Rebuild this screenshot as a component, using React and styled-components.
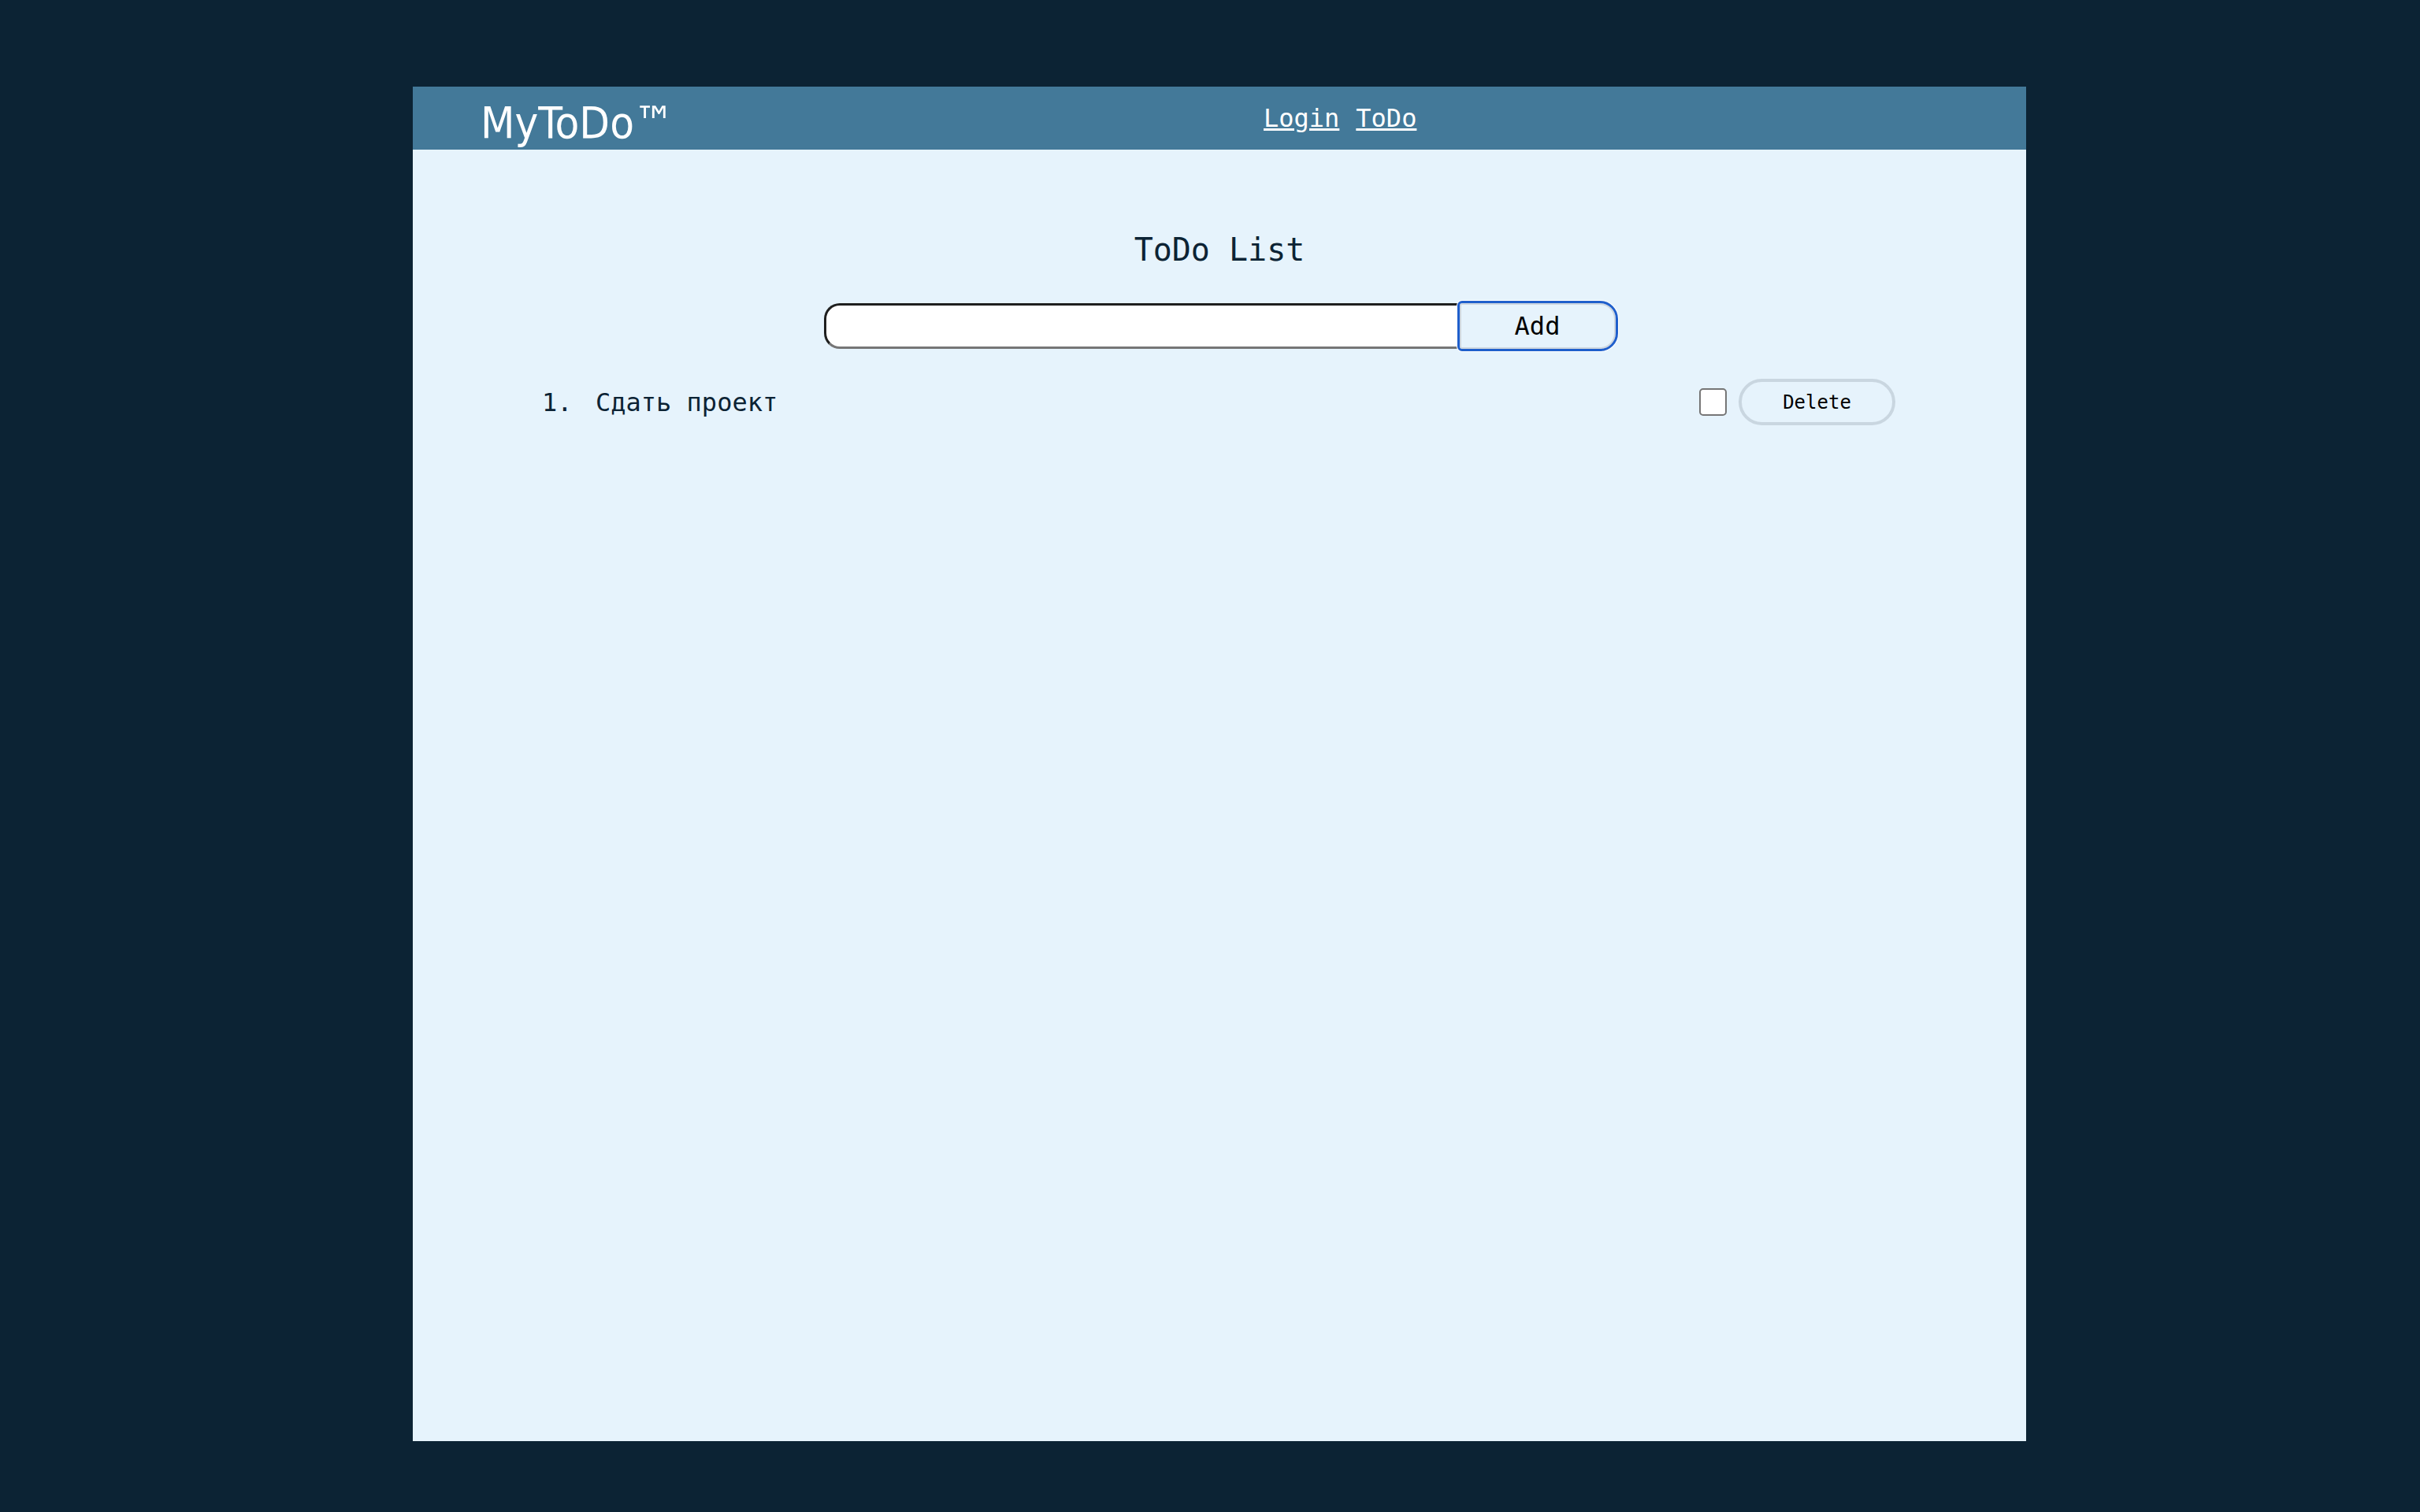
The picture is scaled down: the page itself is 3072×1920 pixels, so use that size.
import React, { useState } from "react"
import styled, { createGlobalStyle } from "styled-components"

const GlobalStyle = createGlobalStyle`
    html, body {
        margin: 0;
        padding: 0;
        background: #0c2334;
    }
    body {
        font-family: "DejaVu Sans Mono", "Liberation Mono", monospace;
    }
`

const Page = styled.div`
    display: flex;
    justify-content: center;
    padding: 110px 0 90px 24px;
`

const Panel = styled.div`
    width: 2048px;
    height: 1720px;
    background: #e6f3fc;
    display: flex;
    flex-direction: column;
`

const Header = styled.header`
    display: flex;
    align-items: center;
    height: 80px;
    padding-left: 86px;
    background: #437999;
`

const Logo = styled.div`
    flex: 0 0 994px;
    color: #fff;
    font-family: "DejaVu Sans", "Liberation Sans", sans-serif;
    font-stretch: condensed;
    font-size: 56px;
    padding-top: 10px;
`

const Nav = styled.nav`
    display: flex;
    gap: 21px;
`

const NavLink = styled.a`
    color: #fff;
    font-size: 32px;
    text-decoration: underline;
    cursor: pointer;
`

const Main = styled.main`
    display: flex;
    flex-direction: column;
    padding-top: 103px;
`

const Title = styled.h2`
    margin: 0;
    text-align: center;
    font-size: 40px;
    line-height: 48px;
    font-weight: normal;
    color: #0c2334;
`

const Form = styled.form`
    display: flex;
    justify-content: center;
    margin-top: 44px;
`

const Input = styled.input`
    box-sizing: border-box;
    width: 807px;
    height: 58px;
    padding: 0 18px;
    border: 3px solid;
    border-color: #1f1f1f #767676 #767676 #1f1f1f;
    border-radius: 20px 0 0 20px;
    background: #fff;
    font-family: inherit;
    font-size: 28px;
    outline: none;
`

const AddButton = styled.button`
    box-sizing: border-box;
    width: 198px;
    height: 58px;
    border: 2px solid #cdd6df;
    border-radius: 3px 20px 20px 3px;
    background: #e6f3fc;
    color: #000;
    font-family: inherit;
    font-size: 32px;
    outline: 3px solid #1f5fcc;
    box-shadow: 0 0 0 4px #fff;
    cursor: pointer;
`

const List = styled.ol`
    list-style: none;
    margin: 38px 0 0;
    padding: 0 166px 0 164px;
`

const Item = styled.li`
    display: flex;
    align-items: center;
    gap: 15px;
    height: 59px;
    color: #0c2334;
    font-size: 32px;
`

const Number = styled.span`
    flex: 0 0 68px;
    margin-right: -15px;
`

const Text = styled.span`
    flex: 1;
`

const Check = styled.input`
    appearance: none;
    box-sizing: border-box;
    width: 35px;
    height: 35px;
    margin: 0;
    border: 2px solid #767676;
    border-radius: 5px;
    background: #fff;
    &:checked {
        background: #1f5fcc;
        border-color: #1f5fcc;
    }
`

const DeleteButton = styled.button`
    box-sizing: border-box;
    width: 199px;
    height: 59px;
    border: 4px solid #c9d6e0;
    border-radius: 30px;
    background: transparent;
    color: #000;
    font-family: inherit;
    font-size: 24px;
    cursor: pointer;
`

export default function App() {
    const [value, setValue] = useState("")
    const [todos, setTodos] = useState([{ id: 1, text: "Сдать проект", done: false }])

    const handleSubmit = (e) => {
        e.preventDefault()
        if (!value.trim()) return
        setTodos([...todos, { id: Date.now(), text: value, done: false }])
        setValue("")
    }

    const toggle = (id) => {
        setTodos(todos.map(t => t.id === id ? { ...t, done: !t.done } : t))
    }

    const remove = (id) => {
        setTodos(todos.filter(t => t.id !== id))
    }

    return (
        <>
            <GlobalStyle />
            <Page>
                <Panel>
                    <Header>
                        <Logo>MyToDo™</Logo>
                        <Nav>
                            <NavLink>Login</NavLink>
                            <NavLink>ToDo</NavLink>
                        </Nav>
                    </Header>
                    <Main>
                        <Title>ToDo List</Title>
                        <Form onSubmit={handleSubmit}>
                            <Input
                                type="text"
                                value={value}
                                onChange={(e) => setValue(e.target.value)}
                            />
                            <AddButton type="submit">Add</AddButton>
                        </Form>
                        <List>
                            {todos.map((t, i) => (
                                <Item key={t.id}>
                                    <Number>{i + 1}.</Number>
                                    <Text>{t.text}</Text>
                                    <Check
                                        type="checkbox"
                                        checked={t.done}
                                        onChange={() => toggle(t.id)}
                                    />
                                    <DeleteButton onClick={() => remove(t.id)}>Delete</DeleteButton>
                                </Item>
                            ))}
                        </List>
                    </Main>
                </Panel>
            </Page>
        </>
    )
}
